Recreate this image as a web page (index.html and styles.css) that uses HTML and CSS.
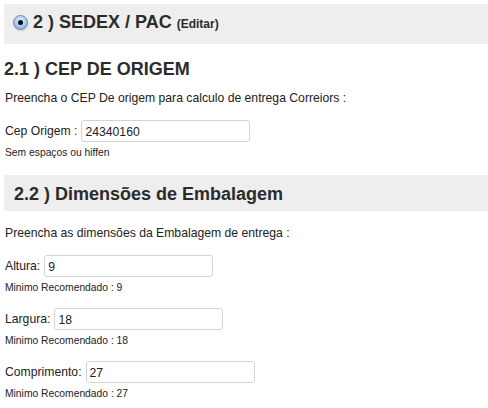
FILE: index.html
```html
<!DOCTYPE html>
<html>
<head>
<meta charset="utf-8">
<link rel="stylesheet" href="styles.css">
</head>
<body>
<div class="page">
  <div class="bar bar-main">
    <span class="radio"><span class="radio-dot"></span></span>
    <span class="bar-title">2 ) SEDEX / PAC</span>
    <span class="edit">(Editar)</span>
  </div>

  <h2 class="sec-title">2.1 ) CEP DE ORIGEM</h2>
  <p class="desc">Preencha o CEP De origem para calculo de entrega Correiors :</p>
  <div class="field">
    <div class="row"><label class="lbl">Cep Origem :</label><input class="inp" type="text" value="24340160"></div>
    <p class="hint">Sem espaços ou hiffen</p>
  </div>

  <h2 class="bar bar-sub">2.2 ) Dimensões de Embalagem</h2>
  <p class="desc desc2">Preencha as dimensões da Embalagem de entrega :</p>
  <div class="field">
    <div class="row"><label class="lbl">Altura:</label><input class="inp" type="text" value="9"></div>
    <p class="hint">Minimo Recomendado : 9</p>
  </div>
  <div class="field">
    <div class="row"><label class="lbl">Largura:</label><input class="inp" type="text" value="18"></div>
    <p class="hint">Minimo Recomendado : 18</p>
  </div>
  <div class="field">
    <div class="row"><label class="lbl">Comprimento:</label><input class="inp" type="text" value="27"></div>
    <p class="hint">Minimo Recomendado : 27</p>
  </div>
</div>
</body>
</html>
```
FILE: styles.css
```css
html, body {
  margin: 0;
  padding: 0;
  background: #fff;
}
body {
  font-family: "Liberation Sans", Arial, Helvetica, sans-serif;
  color: #333;
}
.page {
  padding: 4px 0 0 4px;
}
.bar {
  background: #eeeeee;
  margin: 0;
}
.bar-main {
  height: 40px;
  display: flex;
  align-items: center;
  padding-left: 9px;
  box-sizing: border-box;
}
.radio {
  width: 15px;
  height: 15px;
  border-radius: 50%;
  box-sizing: border-box;
  border: 1px solid #6f86ab;
  background: radial-gradient(circle at 50% 35%, #e4f0ff 0%, #a9c8f0 55%, #6f9ddd 100%);
  box-shadow: 0 1px 1px rgba(0, 0, 0, 0.15);
  display: flex;
  align-items: center;
  justify-content: center;
  margin-right: 5px;
  margin-top: -4px;
}
.radio-dot {
  width: 5px;
  height: 5px;
  border-radius: 50%;
  background: #0a0a14;
}
.bar-title {
  font-size: 18px;
  font-weight: bold;
  color: #2b2b2b;
  margin-top: -3px;
}
.edit {
  font-size: 12px;
  font-weight: bold;
  color: #2b2b2b;
  margin-left: 5px;
}
.sec-title {
  font-size: 18px;
  line-height: 22px;
  font-weight: bold;
  margin: 14px 0 0 0;
  color: #2b2b2b;
}
.desc {
  font-size: 12.2px;
  line-height: 16px;
  margin: 10px 0 0 1px;
  color: #222;
}
.field {
  margin-top: 14px;
}
.row {
  display: flex;
  align-items: center;
  gap: 4px;
  margin-left: 1px;
}
.lbl {
  font-size: 12.2px;
  color: #222;
}
.inp {
  width: 169px;
  height: 22px;
  box-sizing: border-box;
  border: 1px solid #d4d4d4;
  border-radius: 3px;
  padding: 1px 3px 0;
  font-family: "Liberation Sans", Arial, Helvetica, sans-serif;
  font-size: 12.2px;
  color: #222;
  background: #fff;
  outline: none;
}
.hint {
  font-size: 10.3px;
  line-height: 13px;
  margin: 4px 0 0 1px;
  color: #222;
}
.bar-sub {
  margin-top: 16px;
  height: 36px;
  box-sizing: border-box;
  padding: 8px 0 0 10px;
  font-size: 18px;
  line-height: 22px;
  font-weight: bold;
  color: #2b2b2b;
}
.desc2 {
  margin-top: 14px;
}
```
